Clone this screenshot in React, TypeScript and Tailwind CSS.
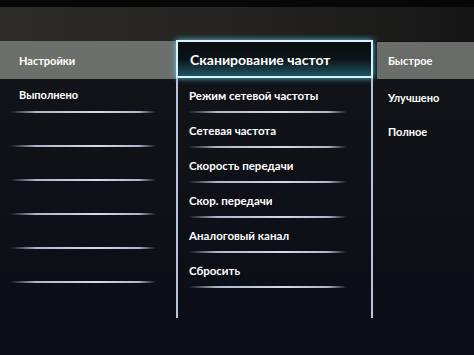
const leftRows = ["Выполнено", "", "", "", "", ""];

const midRows = [
  "Режим сетевой частоты",
  "Сетевая частота",
  "Скорость передачи",
  "Скор. передачи",
  "Аналоговый канал",
  "Сбросить",
];

const rightRows = ["Улучшено", "Полное"];

function Separator({ className = "" }: { className?: string }) {
  return (
    <div
      className={`h-[2px] bg-[linear-gradient(to_right,transparent,#aeb7c9_18%,#d3dae8_60%,#aeb7c9_88%,transparent)] ${className}`}
    />
  );
}

export default function App() {
  return (
    <div
      className="w-[474px] h-[355px] overflow-hidden bg-[#0b0e16] text-white flex flex-col"
      style={{ fontFamily: "Lato, 'Open Sans', sans-serif" }}
    >
      {/* bezel + header band */}
      <div className="h-[7px] bg-[#070707]" />
      <div className="h-[34px] bg-gradient-to-r from-[#2d2b28] via-[#242321] to-[#161616]" />

      <div className="flex flex-1 bg-gradient-to-b from-[#121418] to-[#0a0d16]">
        {/* left column */}
        <div className="w-[176px] flex flex-col">
          <div className="h-[38px] bg-[#6d6f6c] flex items-center pl-[19px] pt-[2px] text-[11px] font-bold">
            Настройки
          </div>
          {leftRows.map((label, i) => (
            <div key={i} className="h-[34px] flex flex-col">
              <div className="flex-1 flex items-center pl-[19px] text-[11px] font-bold">
                {label}
              </div>
              <Separator className="ml-[10px] mr-[20px]" />
            </div>
          ))}
        </div>

        {/* middle column */}
        <div className="w-[197px] h-[277px] flex flex-col border-x-2 border-[#b9c3d6]">
          <div className="h-[38px] -mx-[2px] -mt-[1px] border-2 border-[#d6f4fb] shadow-[0_0_6px_#5fc8e0] bg-gradient-to-b from-[#0a0d10] via-[#0b1418] to-[#1d5664] flex items-center pl-[12px] text-[14px] font-bold">
            Сканирование частот
          </div>
          {midRows.map((label) => (
            <div key={label} className="h-[35px] flex flex-col">
              <div className="flex-1 flex items-center pl-[11px] pt-[2px] text-[11.5px] font-bold">
                {label}
              </div>
              <Separator className="ml-[10px] mr-[24px]" />
            </div>
          ))}
        </div>

        {/* right column */}
        <div className="flex-1 flex flex-col pl-[4px] pt-[1px]">
          <div className="h-[37px] bg-[#6a6c69] flex items-center pl-[11px] pt-[2px] text-[11px] font-bold">
            Быстрое
          </div>
          {rightRows.map((label) => (
            <div key={label} className="h-[34px] flex items-center pl-[11px] pt-[4px] text-[11px] font-bold">
              {label}
            </div>
          ))}
        </div>
      </div>
    </div>
  );
}
